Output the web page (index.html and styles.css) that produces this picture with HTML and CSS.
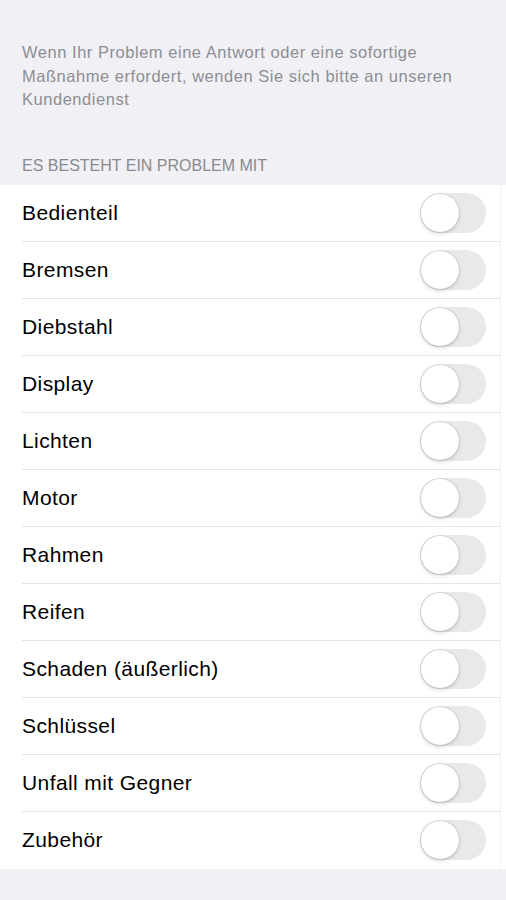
FILE: index.html
```html
<!DOCTYPE html>
<html lang="de">
<head>
    <meta charset="UTF-8">
    <meta name="viewport" content="width=device-width, initial-scale=1.0">
    <title>Problem melden</title>
    <link rel="stylesheet" href="styles.css">
</head>
<body>
    <p class="intro">Wenn Ihr Problem eine Antwort oder eine sofortige Maßnahme erfordert, wenden Sie sich bitte an unseren Kundendienst</p>

    <h2 class="section-title">ES BESTEHT EIN PROBLEM MIT</h2>

    <ul class="list">
        <li class="row"><span class="label">Bedienteil</span><span class="switch"></span></li>
        <li class="row"><span class="label">Bremsen</span><span class="switch"></span></li>
        <li class="row"><span class="label">Diebstahl</span><span class="switch"></span></li>
        <li class="row"><span class="label">Display</span><span class="switch"></span></li>
        <li class="row"><span class="label">Lichten</span><span class="switch"></span></li>
        <li class="row"><span class="label">Motor</span><span class="switch"></span></li>
        <li class="row"><span class="label">Rahmen</span><span class="switch"></span></li>
        <li class="row"><span class="label">Reifen</span><span class="switch"></span></li>
        <li class="row"><span class="label">Schaden (äußerlich)</span><span class="switch"></span></li>
        <li class="row"><span class="label">Schlüssel</span><span class="switch"></span></li>
        <li class="row"><span class="label">Unfall mit Gegner</span><span class="switch"></span></li>
        <li class="row"><span class="label">Zubehör</span><span class="switch"></span></li>
    </ul>
</body>
</html>
```

FILE: styles.css
```css
body {
    font-family: "Liberation Sans", Arial, sans-serif;
    margin: 0;
    padding: 0;
    background-color: #f0f0f5;
    -webkit-font-smoothing: antialiased;
}

/* Intro text */
.intro {
    margin: 0;
    padding: 41px 22px 0 22px;
    font-size: 16.5px;
    letter-spacing: 0.53px;
    line-height: 23.5px;
    color: #8e8e93;
}

/* Section header */
.section-title {
    margin: 0;
    padding: 44px 22px 9px 22px;
    font-size: 16px;
    font-weight: normal;
    line-height: 20px;
    color: #8a8a8e;
}

/* List */
.list {
    list-style: none;
    margin: 0;
    padding: 0;
    background-color: #fff;
}

.row {
    display: flex;
    align-items: center;
    justify-content: space-between;
    height: 57px;
    margin-left: 22px;
    margin-right: 5px;
    padding-right: 14px;
    border-bottom: 1px solid #e4e4e6;
    border-right: 1px solid #f2f2f4;
    box-sizing: border-box;
}

.row:last-child {
    border-bottom: none;
}

.label {
    font-size: 21px;
    letter-spacing: 0.4px;
    color: #000;
}

/* Toggle switch, off state */
.switch {
    position: relative;
    width: 66px;
    height: 40px;
    border-radius: 20px;
    background-color: #e9e9eb;
}

.switch::after {
    content: "";
    position: absolute;
    left: 1px;
    top: 1px;
    width: 38px;
    height: 38px;
    border-radius: 50%;
    background-color: #fff;
    box-shadow: 0 2px 4px rgba(0, 0, 0, 0.15), 0 0 0 1px rgba(0, 0, 0, 0.07);
}
```
